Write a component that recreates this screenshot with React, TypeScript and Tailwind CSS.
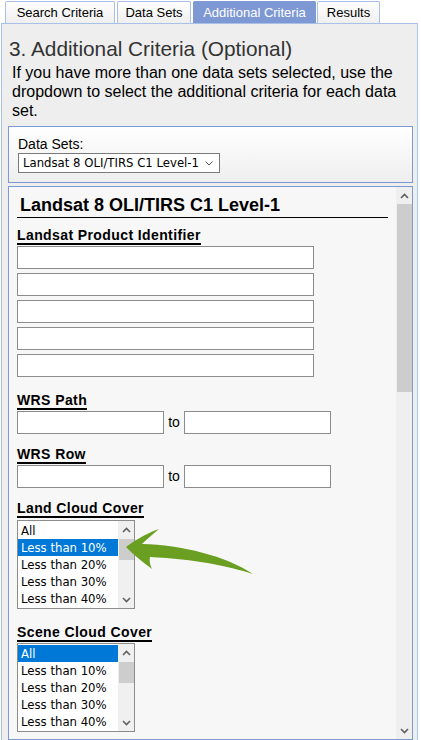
import React from 'react'

const tahoma = { fontFamily: '"DejaVu Sans Condensed", "DejaVu Sans", sans-serif' }

const tabs = [
  { label: 'Search Criteria', w: 'w-[110px]', active: false },
  { label: 'Data Sets', w: 'w-[74px]', active: false },
  { label: 'Additional Criteria', w: 'w-[123px]', active: true },
  { label: 'Results', w: 'w-[63px]', active: false },
]

const Chevron = ({ up }: { up?: boolean }) => (
  <svg width="9" height="6" viewBox="0 0 9 6" className="block">
    <path
      d={up ? 'M1 5 L4.5 1.5 L8 5' : 'M1 1 L4.5 4.5 L8 1'}
      fill="none"
      stroke="#606060"
      strokeWidth="1.6"
    />
  </svg>
)

const Label = ({ children }: { children: React.ReactNode }) => (
  <div className="flex">
    <span className="block text-[14px] font-bold leading-[15px] tracking-[0.4px] border-b-2 border-black text-black">
      {children}
    </span>
  </div>
)

const TextBox = ({ w }: { w: string }) => (
  <div className={`${w} h-[23px] bg-white border border-[#8c8c8c]`} />
)

const RangeRow = () => (
  <div className="flex items-center mt-[1px]">
    <TextBox w="w-[147px]" />
    <span className="w-[20px] text-center text-[14px] text-black">to</span>
    <TextBox w="w-[147px]" />
  </div>
)

const options = ['All', 'Less than 10%', 'Less than 20%', 'Less than 30%', 'Less than 40%']

const ListBox = ({ selected, top }: { selected: number; top: string }) => (
  <div className={`${top} w-[118px] h-[89px] bg-white border border-[#8c8c8c] flex`} style={tahoma}>
    <div className="flex-1 pt-[1px]">
      {options.map((o, i) => (
        <div
          key={o}
          className={`h-[17px] pl-[3px] text-[13px] leading-[17px] whitespace-nowrap ${
            i === selected ? 'bg-[#0078d7] text-white' : 'text-black'
          }`}
        >
          {o}
        </div>
      ))}
    </div>
    <div className="w-[16px] bg-[#f0f0f0] flex flex-col items-center">
      <div className="h-[18px] flex items-center justify-center">
        <Chevron up />
      </div>
      <div className="w-[15px] h-[21px] bg-[#cdcdcd]" />
      <div className="flex-1" />
      <div className="h-[16px] flex items-center justify-center">
        <Chevron />
      </div>
    </div>
  </div>
)

export default function App() {
  return (
    <div
      className="w-[421px] h-[740px] bg-white overflow-hidden relative"
      style={{ fontFamily: '"Liberation Sans", Arial, sans-serif' }}
    >
      {/* TABS */}
      <div className="flex pt-[1px] pl-[5px] gap-[2px]">
        {tabs.map((t) => (
          <div
            key={t.label}
            className={`${t.w} h-[22px] flex items-center justify-center text-[13px] border border-b-0 rounded-t-[2px] ${
              t.active
                ? 'bg-[#7d98d3] border-[#7d98d3] text-white'
                : 'bg-gradient-to-b from-white to-[#efefef] border-[#a9bfe6] text-black'
            } ${t.label === 'Results' ? '-ml-[1px]' : ''}`}
          >
            {t.label}
          </div>
        ))}
      </div>

      {/* PANEL */}
      <div className="ml-[1px] w-[417px] h-[730px] bg-[#eeeeee] border border-[#a9c0e8] pl-[6px] pr-[4px]">
        <h2 className="mt-[13px] text-[20.8px] leading-[23px] text-[#333333] ml-[1px]">
          3. Additional Criteria (Optional)
        </h2>
        <p className="mt-[3px] ml-[4px] text-[16px] leading-[19px] text-black">
          If you have more than one data sets selected, use the dropdown to select the additional criteria for each data
          set.
        </p>

        {/* DATA SET PICKER */}
        <div className="mt-[6px] h-[57px] border border-[#7a9ad4] bg-gradient-to-b from-white to-[#eeeeee] pl-[9px] pt-[9px]">
          <div className="text-[14px] leading-[16px] text-black">Data Sets:</div>
          <div
            className="mt-[1px] w-[202px] h-[20px] bg-white border border-[#7a7a7a] flex items-center pl-[4px] pr-[6px]"
            style={tahoma}
          >
            <span className="flex-1 text-[13px] text-black whitespace-nowrap">Landsat 8 OLI/TIRS C1 Level-1</span>
            <svg width="8" height="5" viewBox="0 0 8 5">
              <path d="M0.5 0.5 L4 4 L7.5 0.5" fill="none" stroke="#555" strokeWidth="1" />
            </svg>
          </div>
        </div>

        {/* CRITERIA */}
        <div className="mt-[3px] h-[554px] border border-[#7a9ad4] bg-[#f7f7f7] flex overflow-hidden">
          <div className="flex-1 pl-[8px] pt-[8px]">
            <div className="w-[371px] border-b border-black pl-[3px] pb-[1px] text-[18px] font-bold leading-[21px] text-black">
              Landsat 8 OLI/TIRS C1 Level-1
            </div>

            <div className="mt-[10px]">
              <Label>Landsat Product Identifier</Label>
              <div className="mt-[1px] flex flex-col gap-[4px]">
                <TextBox w="w-[297px]" />
                <TextBox w="w-[297px]" />
                <TextBox w="w-[297px]" />
                <TextBox w="w-[297px]" />
                <TextBox w="w-[297px]" />
              </div>
            </div>

            <div className="mt-[16px]">
              <Label>WRS Path</Label>
              <RangeRow />
            </div>

            <div className="mt-[13px]">
              <Label>WRS Row</Label>
              <RangeRow />
            </div>

            <div className="mt-[13px]">
              <Label>Land Cloud Cover</Label>
              <ListBox selected={1} top="mt-[2px]" />
            </div>

            <div className="mt-[16px]">
              <Label>Scene Cloud Cover</Label>
              <ListBox selected={0} top="mt-[1px]" />
            </div>
          </div>

          {/* main scrollbar */}
          <div className="w-[16px] bg-[#efefef] flex flex-col items-center">
            <div className="h-[17px] flex items-center justify-center">
              <Chevron up />
            </div>
            <div className="w-[15px] h-[188px] bg-[#cdcdcd]" />
            <div className="flex-1" />
            <div className="h-[17px] flex items-center justify-center">
              <Chevron />
            </div>
          </div>
        </div>
      </div>

      {/* green pointer arrow */}
      <svg className="absolute left-0 top-0 pointer-events-none" width="421" height="740" viewBox="0 0 421 740">
        <path
          d="M126,547 C138,538 150,532 159,529 C152,535 146,540 142,544 C182,545 226,556 253,574 C228,566 195,559 150,557 C149,561 150,565 152,569 C142,562 133,554 126,547 Z"
          fill="#6b9f22"
        />
      </svg>
    </div>
  )
}
